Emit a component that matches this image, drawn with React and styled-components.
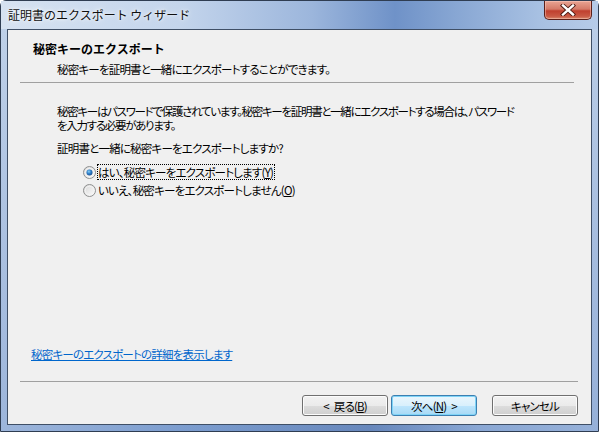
import React from "react";
import styled, { createGlobalStyle } from "styled-components";

const GlobalStyle = createGlobalStyle`
  html, body { margin: 0; padding: 0; background: #ffffff; }
  body { font-family: "Noto Sans CJK JP", "Noto Sans", sans-serif; }
`;

const Window = styled.div`
  width: 599px;
  height: 432px;
  box-sizing: border-box;
  border: 1px solid #2f3d52;
  border-radius: 6px 6px 0 0;
  padding: 0 6px 6px;
  display: flex;
  flex-direction: column;
  background:
    linear-gradient(to right, rgba(255,255,255,0.25), rgba(255,255,255,0) 30%, rgba(40,70,130,0.25) 62%, rgba(255,255,255,0.1) 80%, rgba(255,255,255,0.2)),
    linear-gradient(to bottom, #c3d4ea 0px, #a9c1e1 30px, #8eabd6 60%, #7c9dcf 100%);
`;

const TitleBar = styled.div`
  height: 28px;
  display: flex;
  align-items: flex-start;
  justify-content: space-between;
  background: linear-gradient(to right, #d6e2f1 0%, #c4d5ec 30%, #9cb6dc 52%, #6f92c8 66%, #87a6d3 76%, #a7c0e2 90%, #b6cbe8 100%);
  margin: 0 -6px;
  padding: 0 6px 0 7px;
`;

const TitleText = styled.div`
  font-size: 12px;
  line-height: 16px;
  margin-top: 6px;
  color: #101010;
  text-shadow: 0 0 6px rgba(255,255,255,0.9), 0 0 3px rgba(255,255,255,0.9);
  white-space: nowrap;
`;

const CloseButton = styled.div`
  width: 48px;
  height: 19px;
  box-sizing: border-box;
  border: 1px solid #5b1f19;
  border-top: none;
  border-radius: 0 0 5px 5px;
  background: linear-gradient(to bottom, #e8a493 0%, #d47a68 45%, #c0402f 55%, #c95a45 85%, #d98a6e 100%);
  box-shadow: inset 0 0 0 1px rgba(255,210,200,0.45);
  display: flex;
  align-items: center;
  justify-content: center;
`;

const Client = styled.div`
  flex: 1;
  border: 1px solid #3f4f66;
  background: #f0f0f0;
  display: flex;
  flex-direction: column;
  font-size: 11.5px;
  letter-spacing: -0.8px;
  font-feature-settings: "palt";
  color: #000;
`;

const HeaderTitle = styled.div`
  margin: 11px 0 0 25px;
  font-size: 12px;
  letter-spacing: 0;
  font-feature-settings: normal;
  font-weight: bold;
  line-height: 16px;
  white-space: nowrap;
`;

const HeaderSub = styled.div`
  margin: 4px 0 0 49px;
  line-height: 16px;
  white-space: nowrap;
`;

const Separator = styled.div`
  height: 1px;
  background: #a0a0a0;
  margin: ${p => p.$top}px ${p => p.$right}px 0 12px;
`;

const Paragraph = styled.div`
  margin: ${p => p.$top}px 0 0 49px;
  line-height: 14px;
  white-space: nowrap;
  letter-spacing: ${p => (p.$tight ? "-1.3px" : "-0.8px")};
`;

const RadioRow = styled.div`
  height: 18px;
  display: flex;
  align-items: center;
  padding-left: 75px;
  margin-top: ${p => p.$top || 0}px;
`;

const RadioLabel = styled.span`
  margin-left: 1px;
  line-height: 14px;
  white-space: nowrap;
  border: 1px ${p => (p.$focused ? "dotted #000" : "solid transparent")};
  padding: 0 1px 0 0;
`;

const Mnemonic = styled.span`
  text-decoration: underline;
`;

const Space = styled.span`
  display: inline-block;
  width: 5px;
`;

const Link = styled.a`
  margin: 148px 0 0 23px;
  line-height: 14px;
  color: #0066cc;
  text-decoration: underline;
  white-space: nowrap;
  align-self: flex-start;
  cursor: pointer;
`;

const ButtonRow = styled.div`
  margin: 13px 13px 0 0;
  display: flex;
  justify-content: flex-end;
`;

const Button = styled.div`
  width: 86px;
  height: 21px;
  box-sizing: border-box;
  border: 1px solid ${p => (p.$default ? "#3c7fb1" : "#707070")};
  border-radius: 3px;
  margin-left: ${p => p.$gap || 0}px;
  display: flex;
  align-items: center;
  justify-content: center;
  line-height: 14px;
  white-space: nowrap;
  background: ${p =>
    p.$default
      ? "linear-gradient(to bottom, #eaf6fd 0%, #d9f0fc 50%, #bee6fd 51%, #a7d9f5 100%)"
      : "linear-gradient(to bottom, #f2f2f2 0%, #ebebeb 50%, #dddddd 51%, #cfcfcf 100%)"};
  box-shadow: inset 0 0 0 1px ${p => (p.$default ? "#7fd4f7" : "#fcfcfc")};
`;

function RadioIcon({ checked }) {
  const gid = checked ? "rgc" : "rgu";
  return (
    <svg width="13" height="13" viewBox="0 0 13 13">
      <defs>
        <linearGradient id={gid} x1="0" y1="0" x2="1" y2="1">
          <stop offset="0" stopColor="#d5d5d5" />
          <stop offset="1" stopColor="#ffffff" />
        </linearGradient>
        <radialGradient id="dot" cx="0.4" cy="0.35" r="0.7">
          <stop offset="0" stopColor="#8ad0f7" />
          <stop offset="0.5" stopColor="#2e7ec8" />
          <stop offset="1" stopColor="#1b4e8e" />
        </radialGradient>
      </defs>
      <circle cx="6.5" cy="6.5" r="6" fill={`url(#${gid})`} stroke="#8e8f8f" />
      <circle cx="6.5" cy="6.5" r="4.3" fill="none" stroke="#f4f4f4" strokeWidth="1" />
      {checked && <circle cx="6.5" cy="6.5" r="3" fill="url(#dot)" />}
    </svg>
  );
}

function CloseGlyph() {
  return (
    <svg width="16" height="12" viewBox="0 0 16 12">
      <path d="M3 1.5 L13 10.5 M13 1.5 L3 10.5" stroke="#4a1810" strokeWidth="4.2" strokeLinecap="square" />
      <path d="M3 1.5 L13 10.5 M13 1.5 L3 10.5" stroke="#ffffff" strokeWidth="2.4" strokeLinecap="square" />
    </svg>
  );
}

export default function App() {
  return (
    <>
      <GlobalStyle />
      <Window>
        <TitleBar>
          <TitleText>証明書のエクスポート ウィザード</TitleText>
          <CloseButton>
            <CloseGlyph />
          </CloseButton>
        </TitleBar>
        <Client>
          <HeaderTitle>秘密キーのエクスポート</HeaderTitle>
          <HeaderSub>秘密キーを証明書と一緒にエクスポートすることができます。</HeaderSub>
          <Separator $top={5} $right={17} />
          <Paragraph $top={21} $tight>
            秘密キーはパスワードで保護されています。秘密キーを証明書と一緒にエクスポートする場合は、パスワード
            <br />
            を入力する必要があります。
          </Paragraph>
          <Paragraph $top={9}>証明書と一緒に秘密キーをエクスポートしますか?</Paragraph>
          <RadioRow $top={8}>
            <RadioIcon checked />
            <RadioLabel $focused>
              はい、秘密キーをエクスポートします(<Mnemonic>Y</Mnemonic>)
            </RadioLabel>
          </RadioRow>
          <RadioRow>
            <RadioIcon />
            <RadioLabel>
              いいえ、秘密キーをエクスポートしません(<Mnemonic>O</Mnemonic>)
            </RadioLabel>
          </RadioRow>
          <Link>秘密キーのエクスポートの詳細を表示します</Link>
          <Separator $top={20} $right={13} />
          <ButtonRow>
            <Button>
              &lt;<Space />戻る(<Mnemonic>B</Mnemonic>)
            </Button>
            <Button $default $gap={3}>
              次へ(<Mnemonic>N</Mnemonic>)<Space />&gt;
            </Button>
            <Button $gap={15}>キャンセル</Button>
          </ButtonRow>
        </Client>
      </Window>
    </>
  );
}
